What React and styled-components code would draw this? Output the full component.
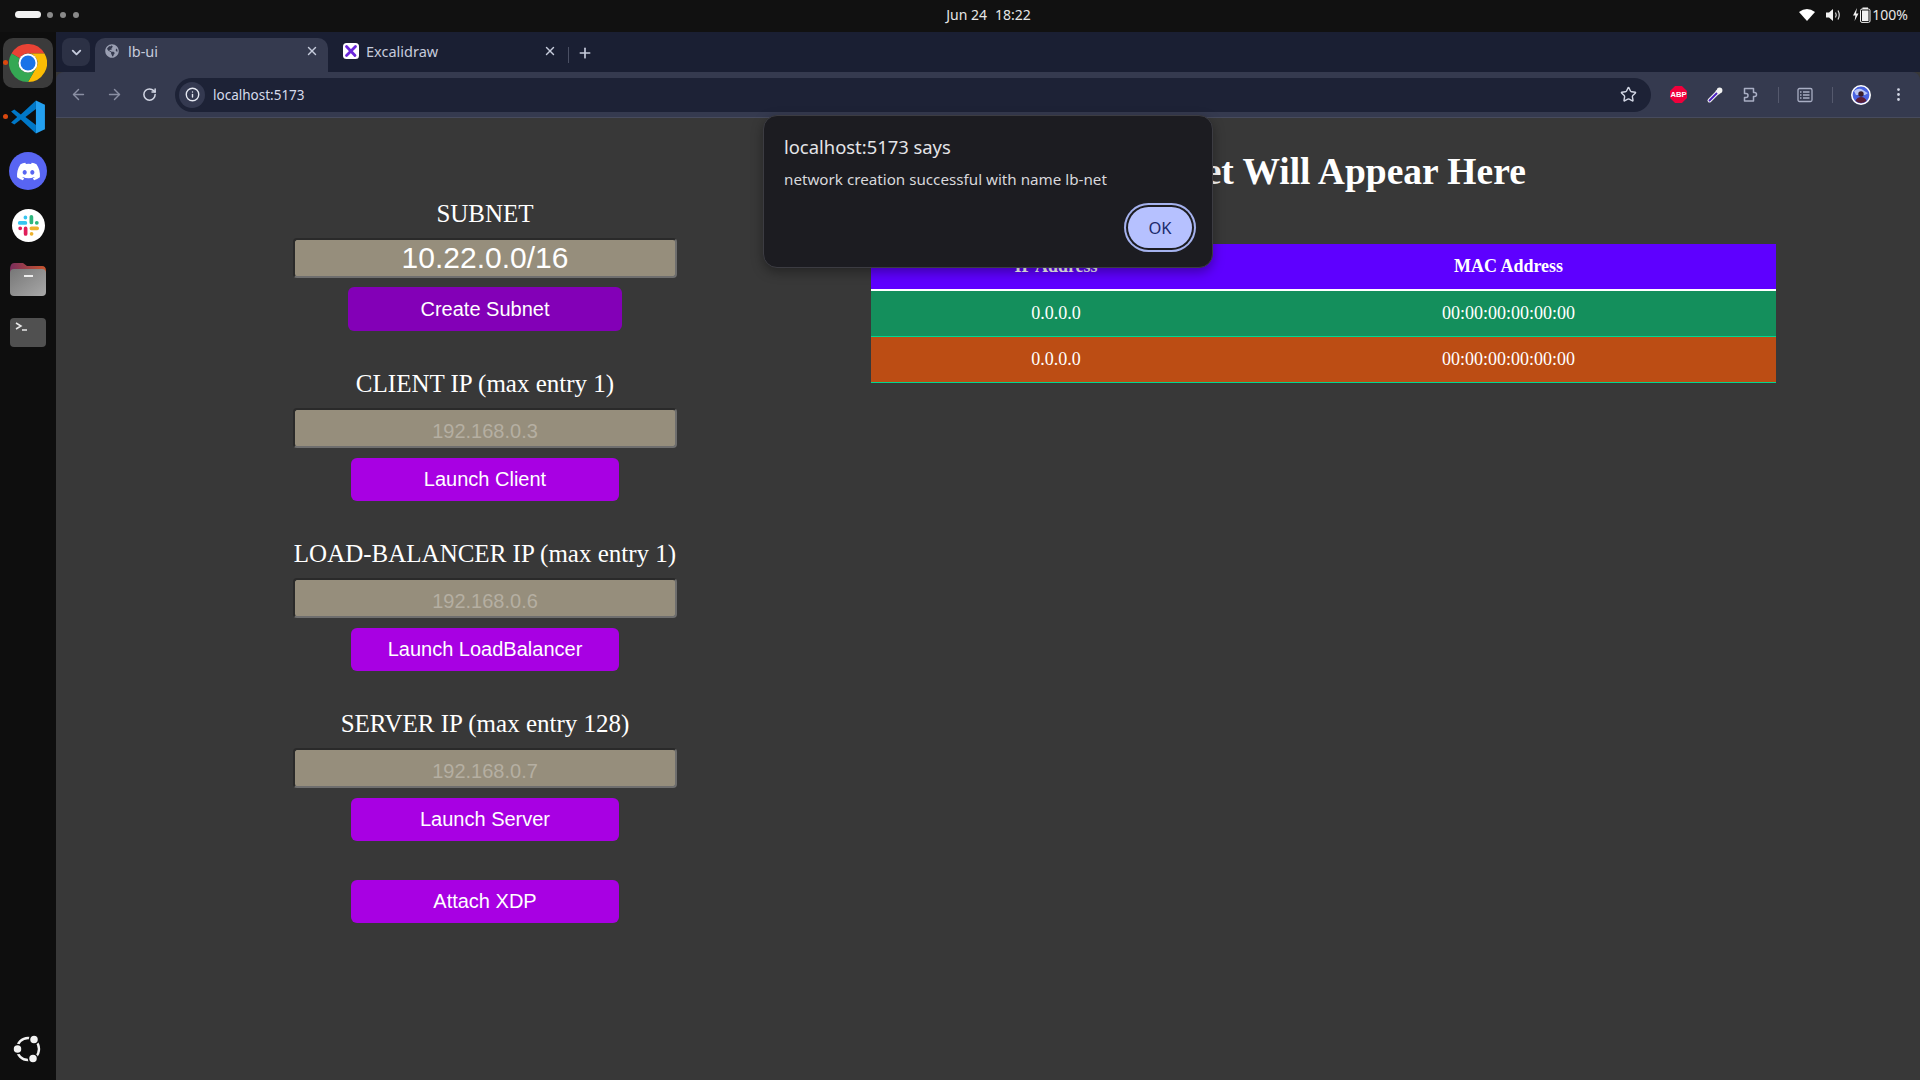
import React from 'react';
import styled, { createGlobalStyle } from 'styled-components';
import {
  ArrowLeft, ArrowRight, RotateCw, Info, Star, X, Plus, ChevronDown, EllipsisVertical,
} from 'lucide-react';
import { FaDiscord, FaGlobeAmericas } from 'react-icons/fa';

const GlobalStyle = createGlobalStyle`
  html, body { margin: 0; padding: 0; background: #383838; overflow: hidden; }
  * { box-sizing: border-box; }
`;

const Screen = styled.div`
  width: 1920px;
  height: 1080px;
  display: flex;
  flex-direction: column;
  position: relative;
  overflow: hidden;
  font-family: "Noto Sans", sans-serif;
`;

/* ---- ubuntu top bar ---- */
const TopBar = styled.div`
  height: 32px;
  flex: none;
  background: #111111;
  display: grid;
  grid-template-columns: 1fr auto 1fr;
  align-items: center;
  padding: 0 12px 3px 15px;
  color: #e6e6e6;
  font-size: 14px;
`;
const Workspaces = styled.div`
  display: flex;
  align-items: center;
  gap: 7px;
`;
const Pill = styled.span`
  width: 26px;
  height: 7px;
  border-radius: 4px;
  background: #f2f2f2;
  margin-right: -1px;
`;
const Dot = styled.span`
  width: 6px;
  height: 6px;
  border-radius: 50%;
  background: #8a8a8a;
`;
const Clock = styled.div`
  display: flex;
  gap: 8px;
  margin-left: 54px;
`;
const Tray = styled.div`
  display: flex;
  align-items: center;
  justify-content: flex-end;
  gap: 11px;
`;
const TrayPercent = styled.span`
  margin-left: -10px;
`;

/* ---- body + dock ---- */
const Desk = styled.div`
  flex: 1;
  display: flex;
  min-height: 0;
`;
const Dock = styled.div`
  width: 56px;
  flex: none;
  background: #0e0e0e;
  display: flex;
  flex-direction: column;
  align-items: center;
  gap: 4px;
  padding: 6px 0 6px;
`;
const DockItem = styled.div`
  width: 50px;
  height: 50px;
  border-radius: 10px;
  display: flex;
  align-items: center;
  justify-content: center;
  position: relative;
  background: ${(p) => (p.$active ? '#3b3b3b' : 'transparent')};
  ${(p) => p.$bottom && 'margin-top: auto;'}
`;
const RunDot = styled.span`
  position: absolute;
  left: 0;
  top: 22px;
  width: 5px;
  height: 5px;
  border-radius: 50%;
  background: #d9480f;
`;
const DiscordBadge = styled.div`
  width: 38px;
  height: 38px;
  border-radius: 50%;
  background: #5865f2;
  color: #fff;
  display: flex;
  align-items: center;
  justify-content: center;
`;

/* ---- browser ---- */
const Browser = styled.div`
  flex: 1;
  display: flex;
  flex-direction: column;
  min-width: 0;
`;
const TabStrip = styled.div`
  height: 40px;
  flex: none;
  background: #1a1f33;
  display: flex;
  align-items: flex-end;
  padding-left: 6px;
  color: #c6cbdc;
  font-size: 14.5px;
`;
const TabList = styled.div`
  width: 28px;
  height: 28px;
  border-radius: 8px;
  background: #2c3145;
  display: flex;
  align-items: center;
  justify-content: center;
  margin: 0 5px 6px 0;
`;
const Tab = styled.div`
  width: 233px;
  height: 34px;
  border-radius: 10px 10px 0 0;
  background: ${(p) => (p.$active ? '#353a4f' : 'transparent')};
  display: flex;
  align-items: center;
  gap: 9px;
  padding: 0 9px 8px 10px;
  margin-left: ${(p) => (p.$active ? '0' : '5px')};
  margin-right: ${(p) => (p.$active ? '0' : '2px')};
`;
const TabTitle = styled.span`
  flex: 1;
`;
const TabSep = styled.span`
  width: 1px;
  height: 16px;
  background: #4a4f63;
  margin: 0 8px 9px 0;
`;
const NewTab = styled.div`
  display: flex;
  margin-bottom: 11px;
`;
const Toolbar = styled.div`
  height: 46px;
  flex: none;
  background: #353a4f;
  border-bottom: 1px solid #474b5d;
  border-radius: 8px 8px 0 0;
  display: flex;
  align-items: center;
  padding: 0 13px 0 14px;
  color: #8a8fa3;
`;
const NavIcons = styled.div`
  display: flex;
  align-items: center;
  gap: 19px;
  margin-right: 18px;
`;
const Omnibox = styled.div`
  width: 1476px;
  height: 34px;
  border-radius: 17px;
  background: #1d2236;
  display: flex;
  align-items: center;
  padding: 0 3px 0 4px;
  color: #d6dbeb;
  font-size: 13.5px;
`;
const InfoChip = styled.div`
  width: 26px;
  height: 26px;
  border-radius: 50%;
  background: #343950;
  display: flex;
  align-items: center;
  justify-content: center;
  margin-right: 8px;
`;
const Url = styled.span`
  flex: 1;
`;
const StarSlot = styled.div`
  display: flex;
  margin-right: 11px;
`;
const Extensions = styled.div`
  flex: 1;
  display: flex;
  align-items: center;
  justify-content: space-between;
  padding-left: 19px;
  color: #d2d6e4;
`;
const ToolSep = styled.span`
  width: 1px;
  height: 16px;
  background: #55596d;
`;

/* ---- the page itself ---- */
const Page = styled.div`
  flex: 1;
  background: #383838;
  display: flex;
  align-items: flex-start;
  font-family: "Liberation Serif", serif;
  color: #fff;
`;
const Controls = styled.div`
  width: 384px;
  margin: 81px 0 0 237px;
  display: flex;
  flex-direction: column;
  align-items: center;
  gap: 38px;
`;
const Group = styled.div`
  width: 100%;
  display: flex;
  flex-direction: column;
  align-items: center;
`;
const FieldLabel = styled.div`
  height: 28px;
  line-height: 30px;
  font-size: 25px;
  margin-bottom: 11px;
  white-space: nowrap;
`;
const Field = styled.input`
  width: 100%;
  height: 40px;
  background: #968e7c;
  border: 2px solid;
  border-color: #2a2a2a #6e6e6e #6e6e6e #2a2a2a;
  border-radius: 4px;
  text-align: center;
  font-family: "Liberation Sans", sans-serif;
  font-size: ${(p) => (p.$big ? '30px' : '20px')};
  color: #fff;
  padding: ${(p) => (p.$big ? '0' : '6px 0 0')};
  &::placeholder { color: #b5afa2; opacity: 1; }
`;
const ActionButton = styled.button`
  width: ${(p) => (p.$wide ? '274px' : '268px')};
  height: ${(p) => (p.$wide ? '44px' : '43px')};
  margin-top: ${(p) => {
    if (p.$flush) return '1px';
    return p.$wide ? '9px' : '10px';
  }};
  border: 0;
  border-radius: 6px;
  background: ${(p) => (p.$wide ? '#8300b7' : '#a800e3')};
  color: #fff;
  font-family: "Liberation Sans", sans-serif;
  font-size: 20px;
`;
const Results = styled.div`
  width: 905px;
  margin: 31px 0 0 194px;
`;
const Heading = styled.h1`
  margin: 0 0 49px;
  height: 46px;
  line-height: 46px;
  font-size: 37.5px;
  font-weight: bold;
  text-align: center;
`;
const HostTable = styled.table`
  width: 100%;
  border-collapse: collapse;
  table-layout: fixed;
  font-size: 18px;
`;
const HeadCell = styled.th`
  height: 46px;
  background: #5e00ff;
  border-bottom: 2px solid #fff;
  font-weight: bold;
  padding-bottom: 2px;
  width: ${(p) => p.$w};
`;
const Cell = styled.td`
  height: 46px;
  padding: 1px 0 0;
  text-align: center;
  background: ${(p) => p.$bg};
  border-bottom: 1px solid #00d690;
`;

/* ---- alert dialog ---- */
const Alert = styled.div`
  position: absolute;
  left: 763px;
  top: 115px;
  width: 450px;
  height: 153px;
  background: #1c1c21;
  border: 1px solid #3c3c42;
  border-radius: 14px;
  box-shadow: 0 4px 12px rgba(0, 0, 0, 0.35);
  padding: 17px 16px 0 20px;
  display: flex;
  flex-direction: column;
  color: #e4e4e8;
`;
const AlertTitle = styled.div`
  font-size: 18.4px;
  line-height: 28px;
`;
const AlertText = styled.div`
  font-size: 15.2px;
  line-height: 20px;
  margin-top: 8px;
  color: #d8d8dc;
`;
const OkButton = styled.button`
  align-self: flex-end;
  margin: 18px 4px 0 0;
  width: 64px;
  height: 41px;
  border: 0;
  border-radius: 21px;
  background: #b6c1ff;
  box-shadow: 0 0 0 2px #1c1c21, 0 0 0 4px #a5b2ee;
  color: #1b2a6b;
  font-family: "Noto Sans", sans-serif;
  font-size: 16.5px;
`;

const ChromeLogo = ({ size = 38 }) => (
  <svg width={size} height={size} viewBox="0 0 48 48">
    <path fill="#ea4335" d="M3.2 12A24 24 0 0 1 44.8 12H24A12 12 0 0 0 13.6 18Z" />
    <path fill="#fbbc04" d="M44.8 12A24 24 0 0 1 24 48L34.4 30A12 12 0 0 0 24 12Z" />
    <path fill="#34a853" d="M24 48A24 24 0 0 1 3.2 12L13.6 18A12 12 0 0 0 34.4 30Z" />
    <circle cx="24" cy="24" r="12" fill="#fff" />
    <circle cx="24" cy="24" r="9.5" fill="#1a73e8" />
  </svg>
);

const VsCodeLogo = () => (
  <svg width="36" height="36" viewBox="0 0 100 100">
    <path fill="#0078c8" d="M72 4L30 43L12 29L3 35L20 50L3 65L12 71L30 57L72 96V72L43 50L72 28Z" />
    <path fill="#23a0f0" d="M72 4L97 16V84L72 96Z" />
  </svg>
);

const SlackLogo = () => (
  <svg width="33" height="33" viewBox="0 0 32 32">
    <circle cx="16" cy="16" r="16" fill="#fff" />
    <g fill="none" strokeLinecap="round" strokeWidth="3.6">
      <path stroke="#36c5f0" d="M7.5 13.5H13M13 8.2v.1" />
      <path stroke="#2eb67d" d="M18.8 7.5V13M24 13.4h.1" />
      <path stroke="#ecb22e" d="M18.8 18.7h5.6M19 24v.1" />
      <path stroke="#e01e5a" d="M13.2 18.8v5.4M8 18.7h-.1" />
    </g>
  </svg>
);

const FolderLogo = () => (
  <svg width="36" height="34" viewBox="0 0 36 34">
    <defs>
      <linearGradient id="fold-top" x1="0" x2="1" y1="0" y2="0">
        <stop offset="0" stopColor="#7a2d5c" />
        <stop offset="1" stopColor="#c9562e" />
      </linearGradient>
      <linearGradient id="fold-body" x1="0" x2="1" y1="0" y2="1">
        <stop offset="0" stopColor="#777" />
        <stop offset="1" stopColor="#a8a8a8" />
      </linearGradient>
    </defs>
    <path fill="url(#fold-top)" d="M0 8Q0 1 4 1H13L17 4H32Q36 4 36 9V14H0Z" />
    <rect y="7" width="36" height="27" rx="4" fill="url(#fold-body)" />
    <rect x="14" y="13" width="9" height="2" fill="#eee" />
  </svg>
);

const TerminalLogo = () => (
  <svg width="36" height="30" viewBox="0 0 36 30">
    <rect width="36" height="29" rx="4" fill="#505050" />
    <path d="M6 5L11 8L6 11" fill="none" stroke="#e8e8e8" strokeWidth="1.5" />
    <path d="M12 12H17" stroke="#e8e8e8" strokeWidth="1.5" />
  </svg>
);

const UbuntuLogo = () => (
  <svg width="30" height="30" viewBox="0 0 30 30">
    <circle cx="15" cy="15" r="11" fill="none" stroke="#f2f2f2" strokeWidth="2.4" />
    <circle cx="21" cy="5.5" r="4.5" fill="#f2f2f2" stroke="#0e0e0e" strokeWidth="1.5" />
    <circle cx="4.5" cy="15" r="4.5" fill="#f2f2f2" stroke="#0e0e0e" strokeWidth="1.5" />
    <circle cx="20" cy="24.5" r="4.5" fill="#f2f2f2" stroke="#0e0e0e" strokeWidth="1.5" />
  </svg>
);

const ExcalidrawIcon = () => (
  <svg width="16" height="16" viewBox="0 0 16 16" style={{ marginRight: -2 }}>
    <rect width="16" height="16" rx="3.5" fill="#fff" />
    <path d="M3.5 3.5L12 12.5M12.5 3.5L3.5 12.5" stroke="#6a27d9" strokeWidth="2.8" strokeLinecap="round" />
  </svg>
);

const WifiIcon = () => (
  <svg width="16" height="14" viewBox="0 0 16 14">
    <path fill="#fff" d="M0 4Q8 -2 16 4L8 13Z" />
  </svg>
);

const SpeakerIcon = () => (
  <svg width="16" height="14" viewBox="0 0 16 14">
    <path fill="#f2f2f2" d="M0 4.5H3L7 1V13L3 9.5H0Z" />
    <path d="M9.5 4.5Q11 7 9.5 9.5M12 2.5Q14.5 7 12 11.5" fill="none" stroke="#d8d8d8" strokeWidth="1.2" />
  </svg>
);

const BatteryIcon = () => (
  <svg width="18" height="16" viewBox="0 0 18 16">
    <path fill="#f2f2f2" d="M4 1L0 8.5H2.4L1.6 14L5.5 6.5H3Z" />
    <rect x="7.5" y="2" width="9.5" height="13.4" rx="1.5" fill="none" stroke="#f2f2f2" />
    <rect x="9.5" y="0.5" width="5.5" height="1.5" fill="#f2f2f2" />
    <rect x="9" y="3.5" width="6.5" height="10.5" fill="#f2f2f2" />
  </svg>
);

const AbpIcon = () => (
  <svg width="17" height="17" viewBox="0 0 20 20">
    <path fill="#f0003c" d="M6 0H14L20 6V14L14 20H6L0 14V6Z" />
    <text x="10" y="13.5" textAnchor="middle" fontFamily="Liberation Sans" fontWeight="bold" fontSize="9" fill="#fff">ABP</text>
  </svg>
);

const EyedropperIcon = () => (
  <svg width="18" height="18" viewBox="0 0 18 18" fill="none">
    <path d="M3.5 14.5L11 7" stroke="#f2f2f2" strokeWidth="4" strokeLinecap="round" />
    <path d="M3.5 14.5L11 7" stroke="#4a1fc0" strokeWidth="1.8" strokeLinecap="round" />
    <path d="M10 4.5L13.5 8" stroke="#f2f2f2" strokeWidth="2" />
    <circle cx="13.6" cy="4.4" r="2.8" fill="#f2f2f2" />
  </svg>
);

const ExtensionIcon = () => (
  <svg width="17" height="17" viewBox="0 0 17 17" fill="none" stroke="#a9aec4" strokeWidth="1.5">
    <path d="M2.5 2.5H11.5V6.5H12.5A2 2 0 0 1 12.5 10.5H11.5V15H2.5V11.5H4A2 2 0 0 0 4 7.5H2.5Z" strokeLinejoin="round" />
  </svg>
);

const SidePanelIcon = () => (
  <svg width="16" height="16" viewBox="0 0 16 16" fill="none" stroke="#a9aec4" strokeWidth="1.3">
    <rect x="1" y="1.5" width="14" height="13" rx="1.5" />
    <path d="M6 5H12.5M6 8H12.5M6 11H12.5M3 5H4.5M3 8H4.5M3 11H4.5" />
  </svg>
);

const AvatarIcon = () => (
  <svg width="20" height="20" viewBox="0 0 20 20">
    <circle cx="10" cy="10" r="10" fill="#fff" />
    <circle cx="10" cy="10" r="8.4" fill="#4a63e0" />
    <path fill="#b9c6f5" d="M3 6Q8 2 12 5T17 8L14 10H5Z" />
    <circle cx="10" cy="9" r="2.7" fill="#3a1c28" />
    <path fill="#5b1f36" d="M4.5 16Q6 12 10 12T15.5 16Q10 20 4.5 16Z" />
  </svg>
);

const fields = [
  { label: 'CLIENT IP (max entry 1)', placeholder: '192.168.0.3', action: 'Launch Client' },
  { label: 'LOAD-BALANCER IP (max entry 1)', placeholder: '192.168.0.6', action: 'Launch LoadBalancer' },
  { label: 'SERVER IP (max entry 128)', placeholder: '192.168.0.7', action: 'Launch Server' },
];

const hosts = [
  { ip: '0.0.0.0', mac: '00:00:00:00:00:00', bg: '#148f5c' },
  { ip: '0.0.0.0', mac: '00:00:00:00:00:00', bg: '#bc4d14' },
];

export default function App() {
  return (
    <Screen>
      <GlobalStyle />
      <TopBar>
        <Workspaces>
          <Pill />
          <Dot />
          <Dot />
          <Dot />
        </Workspaces>
        <Clock>
          <span>Jun 24</span>
          <span>18:22</span>
        </Clock>
        <Tray>
          <WifiIcon />
          <SpeakerIcon />
          <BatteryIcon />
          <TrayPercent>100%</TrayPercent>
        </Tray>
      </TopBar>
      <Desk>
        <Dock>
          <DockItem $active>
            <RunDot />
            <ChromeLogo />
          </DockItem>
          <DockItem>
            <RunDot />
            <VsCodeLogo />
          </DockItem>
          <DockItem>
            <DiscordBadge>
              <FaDiscord size={25} />
            </DiscordBadge>
          </DockItem>
          <DockItem>
            <SlackLogo />
          </DockItem>
          <DockItem>
            <FolderLogo />
          </DockItem>
          <DockItem>
            <TerminalLogo />
          </DockItem>
          <DockItem $bottom>
            <UbuntuLogo />
          </DockItem>
        </Dock>
        <Browser>
          <TabStrip>
            <TabList>
              <ChevronDown size={15} strokeWidth={3} />
            </TabList>
            <Tab $active>
              <FaGlobeAmericas size={14} color="#9ba0b3" />
              <TabTitle>lb-ui</TabTitle>
              <X size={14} strokeWidth={2.5} />
            </Tab>
            <Tab>
              <ExcalidrawIcon />
              <TabTitle>Excalidraw</TabTitle>
              <X size={14} strokeWidth={2.5} />
            </Tab>
            <TabSep />
            <NewTab>
              <Plus size={16} strokeWidth={2.5} />
            </NewTab>
          </TabStrip>
          <Toolbar>
            <NavIcons>
              <ArrowLeft size={17} />
              <ArrowRight size={17} />
              <RotateCw size={15} color="#d2d6e4" strokeWidth={2.4} />
            </NavIcons>
            <Omnibox>
              <InfoChip>
                <Info size={15} color="#e6e9f2" strokeWidth={2.2} />
              </InfoChip>
              <Url>localhost:5173</Url>
              <StarSlot>
                <Star size={17} color="#d2d6e4" strokeWidth={2} />
              </StarSlot>
            </Omnibox>
            <Extensions>
              <AbpIcon />
              <EyedropperIcon />
              <ExtensionIcon />
              <ToolSep />
              <SidePanelIcon />
              <ToolSep />
              <AvatarIcon />
              <EllipsisVertical size={17} />
            </Extensions>
          </Toolbar>
          <Page>
            <Controls>
              <Group>
                <FieldLabel>SUBNET</FieldLabel>
                <Field $big readOnly value="10.22.0.0/16" />
                <ActionButton $wide>Create Subnet</ActionButton>
              </Group>
              {fields.map((f) => (
                <Group key={f.label}>
                  <FieldLabel>{f.label}</FieldLabel>
                  <Field placeholder={f.placeholder} />
                  <ActionButton>{f.action}</ActionButton>
                </Group>
              ))}
              <ActionButton $flush>Attach XDP</ActionButton>
            </Controls>
            <Results>
              <Heading>Subnet Will Appear Here</Heading>
              <HostTable>
                <thead>
                  <tr>
                    <HeadCell $w="370px">IP Address</HeadCell>
                    <HeadCell>MAC Address</HeadCell>
                  </tr>
                </thead>
                <tbody>
                  {hosts.map((h) => (
                    <tr key={h.bg}>
                      <Cell $bg={h.bg}>{h.ip}</Cell>
                      <Cell $bg={h.bg}>{h.mac}</Cell>
                    </tr>
                  ))}
                </tbody>
              </HostTable>
            </Results>
          </Page>
        </Browser>
      </Desk>
      <Alert>
        <AlertTitle>localhost:5173 says</AlertTitle>
        <AlertText>network creation successful with name lb-net</AlertText>
        <OkButton>OK</OkButton>
      </Alert>
    </Screen>
  );
}
